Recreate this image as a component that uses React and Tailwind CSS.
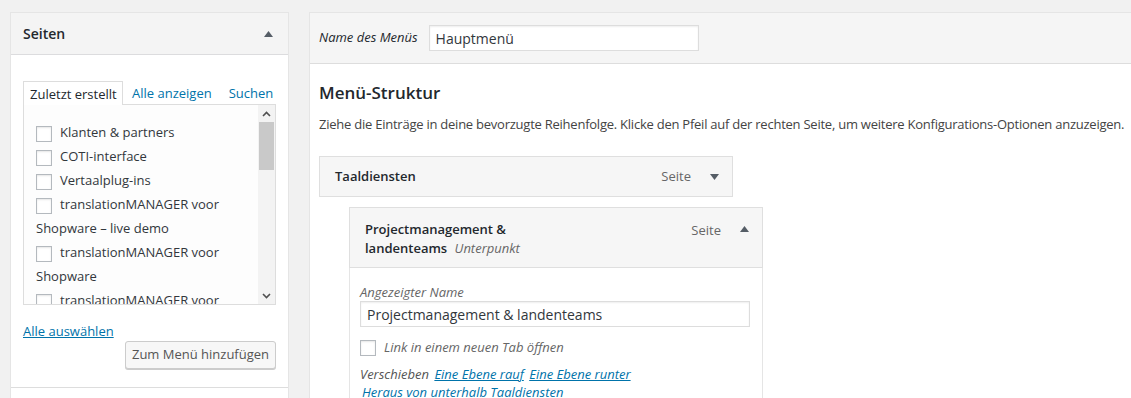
import React from "react";

const font = { fontFamily: '"Open Sans", "Noto Sans", sans-serif' };

function Triangle({ up }) {
    return (
        <svg width="9" height="6" viewBox="0 0 9 6" className="text-[#555d66]">
            {up ? (
                <polygon points="0,6 4.5,0 9,6" fill="currentColor" />
            ) : (
                <polygon points="0,0 9,0 4.5,6" fill="currentColor" />
            )}
        </svg>
    );
}

function Checkbox() {
    return (
        <span className="inline-block w-4 h-4 shrink-0 border border-[#b4b9be] bg-white shadow-[inset_0_1px_2px_rgba(0,0,0,0.1)] align-middle" />
    );
}

const pages = [
    "Klanten & partners",
    "COTI-interface",
    "Vertaalplug-ins",
    "translationMANAGER voor Shopware – live demo",
    "translationMANAGER voor Shopware",
    "translationMANAGER voor Shopware – Enterprise",
];

function PagesBox() {
    return (
        <div className="w-[279px] shrink-0 bg-white border border-[#e5e5e5] h-[400px]">
            <div className="h-[42px] bg-[#f4f4f4] border-b border-[#dcdcde] flex items-center justify-between px-3">
                <span className="text-[14px] font-semibold text-[#23282d]">Seiten</span>
                <span className="mr-[3px]">
                    <Triangle up />
                </span>
            </div>
            <div className="px-3 pt-[25px]">
                <div className="flex items-end text-[13px] h-6">
                    <div className="h-6 w-[100px] border border-b-0 border-[#dddddd] bg-white flex items-center pl-[6px] pt-[3px] text-[#23282d] relative top-px">
                        Zuletzt erstellt
                    </div>
                    <a className="ml-[9px] h-6 flex items-center pt-[3px] text-[#0073aa]">Alle anzeigen</a>
                    <a className="ml-[17px] h-6 flex items-center pt-[3px] text-[#0073aa]">Suchen</a>
                </div>
                <div className="w-[253px] h-[201px] border border-[#dddddd] bg-[#fdfdfd] flex">
                    <div className="flex-1 overflow-hidden pl-3 pt-[15px] pr-2">
                        {pages.map((p) => (
                            <div key={p} className="text-[13px] leading-6 text-[#32373c]">
                                <Checkbox />
                                <span className="ml-2">{p}</span>
                            </div>
                        ))}
                    </div>
                    <div className="w-[17px] shrink-0 bg-[#f3f3f3] flex flex-col">
                        <div className="h-[17px] flex items-center justify-center">
                            <svg width="9" height="6" viewBox="0 0 9 6">
                                <path d="M1 5 L4.5 1.5 L8 5" fill="none" stroke="#505050" strokeWidth="1.6" />
                            </svg>
                        </div>
                        <div className="h-[48px] mx-px bg-[#c9c9c9]" />
                        <div className="flex-1" />
                        <div className="h-[17px] flex items-center justify-center">
                            <svg width="9" height="6" viewBox="0 0 9 6">
                                <path d="M1 1 L4.5 4.5 L8 1" fill="none" stroke="#505050" strokeWidth="1.6" />
                            </svg>
                        </div>
                    </div>
                </div>
                <div className="mt-[16px] text-[13px] leading-5">
                    <a className="text-[#0073aa] underline">Alle auswählen</a>
                </div>
                <div className="flex justify-end">
                    <button className="h-[28px] w-[151px] bg-[#f7f7f7] border border-[#cccccc] rounded-[3px] shadow-[0_1px_0_#cccccc] text-[13px] text-[#555555]">
                        Zum Menü hinzufügen
                    </button>
                </div>
            </div>
            <div className="mt-[18px] border-t border-[#dddddd]" />
        </div>
    );
}

function MenuPanel() {
    return (
        <div className="flex-1 min-w-[830px] bg-white border border-[#e5e5e5] border-r-0 h-[400px]">
            <div className="h-[51px] bg-[#f5f5f5] border-b border-[#dddddd] flex items-center px-[9px]">
                <label className="italic text-[13px] text-[#23282d]">Name des Menüs</label>
                <div className="ml-[11px] w-[270px] h-[26px] border border-[#dddddd] bg-white shadow-[inset_0_1px_2px_rgba(0,0,0,0.07)] flex items-center px-[6px] text-[14px] text-[#32373c]">
                    Hauptmenü
                </div>
            </div>
            <div className="px-[9px]">
                <h3 className="mt-[18px] text-[17px] font-semibold text-[#23282d] leading-[22px]">Menü-Struktur</h3>
                <p className="mt-[10px] text-[13px] text-[#444444] leading-5 whitespace-nowrap tracking-[-0.24px]">
                    Ziehe die Einträge in deine bevorzugte Reihenfolge. Klicke den Pfeil auf der rechten Seite, um weitere Konfigurations-Optionen anzuzeigen.
                </p>
                <div className="mt-[22px] w-[414px] h-[41px] bg-[#f6f6f6] border border-[#dfdfdf] flex items-center pl-[15px] pr-[13px]">
                    <span className="flex-1 text-[13px] font-semibold text-[#23282d]">Taaldiensten</span>
                    <span className="text-[13px] text-[#666666]">Seite</span>
                    <span className="ml-[19px]">
                        <Triangle />
                    </span>
                </div>
                <div className="ml-[30px] mt-[10px] w-[414px]">
                    <div className="bg-[#f6f6f6] border border-[#dfdfdf] flex pl-[15px] pr-[13px] pt-[12px] pb-[10px] h-[61px]">
                        <div className="flex-1">
                            <div className="w-[200px] text-[13px] leading-[19px] font-semibold text-[#23282d]">
                                Projectmanagement &amp; landenteams{" "}
                                <span className="ml-[4px] font-normal italic text-[#666666]">Unterpunkt</span>
                            </div>
                        </div>
                        <span className="text-[13px] text-[#666666] leading-[19px] mt-[1px]">Seite</span>
                        <span className="ml-[19px] mt-[6px]">
                            <Triangle up />
                        </span>
                    </div>
                    <div className="border border-t-0 border-[#e5e5e5] pl-[10px] pr-[12px] pt-[16px] pb-4 h-[140px]">
                        <div className="italic text-[13px] text-[#666666] leading-[17px]">Angezeigter Name</div>
                        <div className="h-[26px] border border-[#dddddd] bg-white shadow-[inset_0_1px_2px_rgba(0,0,0,0.07)] flex items-center px-[6px] text-[14px] text-[#32373c]">
                            Projectmanagement &amp; landenteams
                        </div>
                        <div className="mt-[11px] flex items-center gap-2">
                            <Checkbox />
                            <span className="italic text-[13px] text-[#666666]">Link in einem neuen Tab öffnen</span>
                        </div>
                        <div className="mt-[7px] italic text-[13px] leading-[18px] text-[#555555]">
                            Verschieben{" "}
                            <a className="ml-[2px] text-[#0073aa] underline">Eine Ebene rauf</a>{" "}
                            <a className="ml-[2px] text-[#0073aa] underline">Eine Ebene runter</a>
                            <div className="pl-[2px]">
                                <a className="text-[#0073aa] underline">Heraus von unterhalb Taaldiensten</a>
                            </div>
                        </div>
                    </div>
                </div>
            </div>
        </div>
    );
}

export default function App() {
    return (
        <div className="w-[1131px] h-[398px] overflow-hidden bg-[#f1f1f1] flex gap-[20px] pl-[10px] pt-3" style={font}>
            <PagesBox />
            <MenuPanel />
        </div>
    );
}
